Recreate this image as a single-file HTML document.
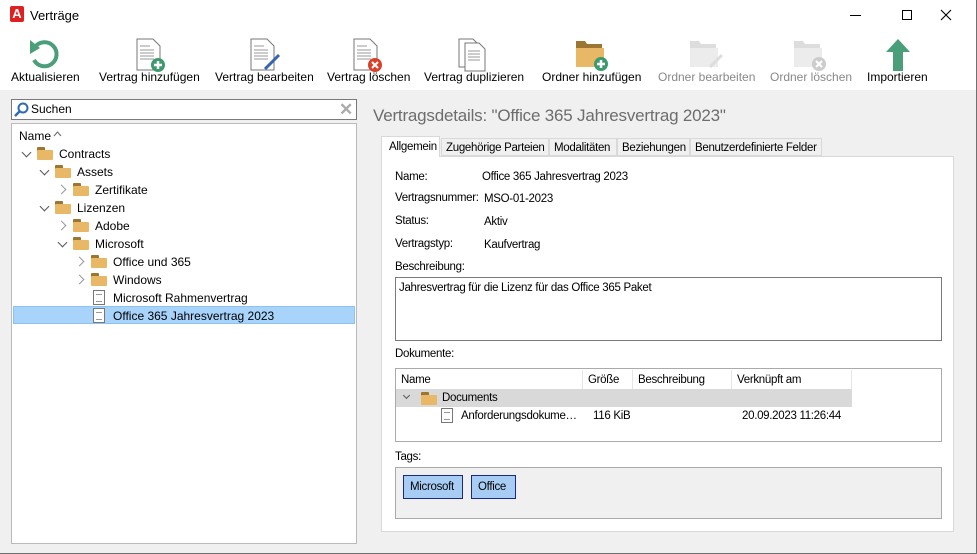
<!DOCTYPE html>
<html><head><meta charset="utf-8"><style>
*{box-sizing:border-box;margin:0;padding:0}
body{width:977px;height:554px;overflow:hidden;background:#f0f0f0;font-family:"Liberation Sans",sans-serif;font-size:12px;color:#000;position:relative}
.a{position:absolute}
.t{position:absolute;white-space:nowrap}
.r .t{font-size:11.5px;letter-spacing:-0.3px}
.fold{position:absolute;width:16px;height:12px}
.fold:before{content:"";position:absolute;left:0;top:0;width:8px;height:4px;background:#9c7530;border-radius:1px 1px 0 0}
.fold:after{content:"";position:absolute;left:0;top:3px;width:16px;height:10px;background:#e8b867;border-radius:1px}
.chev{position:absolute;width:7px;height:7px;border-right:1.5px solid #555;border-bottom:1.5px solid #555}
.down{transform:rotate(45deg)}
.right{transform:rotate(-45deg);border-color:#999}
.doc{position:absolute;width:12px;height:15px;border:1px solid #777;background:#fff}
.doc:after{content:"";position:absolute;left:2px;top:3px;width:6px;height:6px;border-top:1px solid #999;border-bottom:1px solid #999}
</style></head><body>
<div class="a" style="left:0;top:0;width:977px;height:90px;background:#fff"></div>
<div class="a" style="right:0;top:0;width:1px;height:554px;background:#707070"></div>
<div class="a" style="left:0;top:553px;width:977px;height:1px;background:#707070"></div>
<!-- title -->
<div class="a" style="left:10px;top:6px;width:14px;height:16px;background:#e02020;border-radius:2px;color:#fff;font-weight:bold;font-size:13px;text-align:center;line-height:15px">A</div>
<div class="t" style="left:30px;top:8px;font-size:13px">Verträge</div>
<div class="a" style="left:850px;top:15px;width:11px;height:1px;background:#000"></div>
<div class="a" style="left:902px;top:10px;width:10px;height:10px;border:1px solid #000"></div>
<svg class="a" style="left:940px;top:9px" width="12" height="12"><path d="M1 1L11 11M11 1L1 11" stroke="#000" stroke-width="1.1"/></svg>
<!-- toolbar -->
<svg class="a" style="left:0;top:36px" width="977" height="36">
<g fill="none" stroke="#4a9e7a" stroke-width="4"><path d="M35 11 A12 12 0 1 1 34 24"/></g><path d="M30 4 L40 12 L30 18Z" fill="#4a9e7a"/>
<g transform="translate(137,3)"><path d="M0 0h16l7 7v24H0Z" fill="#fff" stroke="#777"/><path d="M3 7h10M3 11h14M3 14h14M3 17h14M3 20h14" stroke="#999"/><circle cx="21" cy="26" r="7" fill="#3d9a6e"/><path d="M21 22v8M17 26h8" stroke="#fff" stroke-width="2.5"/></g>
<g transform="translate(251,3)"><path d="M0 0h16l7 7v24H0Z" fill="#fff" stroke="#777"/><path d="M3 7h10M3 11h14M3 14h14M3 17h14M3 20h14" stroke="#999"/><path d="M14 30 L28 16" stroke="#3565b0" stroke-width="3"/></g>
<g transform="translate(354,3)"><path d="M0 0h16l7 7v24H0Z" fill="#fff" stroke="#777"/><path d="M3 7h10M3 11h14M3 14h14M3 17h14M3 20h14" stroke="#999"/><circle cx="21" cy="26" r="7" fill="#d9402a"/><path d="M18 23l6 6M24 23l-6 6" stroke="#fff" stroke-width="2"/></g>
<g transform="translate(459,3)"><path d="M0 0h14l6 6v22H0Z" fill="#fff" stroke="#777"/><path d="M6 4h14l6 6v22H6Z" fill="#fff" stroke="#777"/><path d="M9 12h12M9 15h12M9 18h12M9 21h12" stroke="#999"/></g>
<g transform="translate(576,5)"><path d="M0 0h9l2 3h15v5H0Z" fill="#9c7530"/><rect x="0" y="7" width="28" height="19" fill="#e8b867"/><circle cx="25" cy="23" r="7" fill="#3d9a6e"/><path d="M25 19v8M21 23h8" stroke="#fff" stroke-width="2.5"/></g>
<g transform="translate(690,5)"><path d="M0 0h9l2 3h15v5H0Z" fill="#ddd"/><rect x="0" y="7" width="28" height="19" fill="#ececec"/><path d="M20 26 L32 14" stroke="#ddd" stroke-width="3"/></g>
<g transform="translate(794,5)"><path d="M0 0h9l2 3h15v5H0Z" fill="#ddd"/><rect x="0" y="7" width="28" height="19" fill="#ececec"/><circle cx="25" cy="23" r="7" fill="#ccc"/><path d="M22 20l6 6M28 20l-6 6" stroke="#fff" stroke-width="2"/></g>
<g transform="translate(885,3)"><path d="M13 0 L25 13 H18 V32 H8 V13 H1Z" fill="#4a9e7a"/></g>
</svg>
<div class="t" style="left:11px;top:70px">Aktualisieren</div>
<div class="t" style="left:99px;top:70px">Vertrag hinzufügen</div>
<div class="t" style="left:215px;top:70px">Vertrag bearbeiten</div>
<div class="t" style="left:327px;top:70px">Vertrag löschen</div>
<div class="t" style="left:424px;top:70px">Vertrag duplizieren</div>
<div class="t" style="left:542px;top:70px">Ordner hinzufügen</div>
<div class="t" style="left:658px;top:70px;color:#888">Ordner bearbeiten</div>
<div class="t" style="left:770px;top:70px;color:#888">Ordner löschen</div>
<div class="t" style="left:867px;top:70px">Importieren</div>
<!-- left -->
<div class="a" style="left:11px;top:99px;width:346px;height:21px;background:#fff;border:1px solid #7a7a7a"></div>
<svg class="a" style="left:14px;top:102px" width="16" height="16"><circle cx="9" cy="6" r="4.5" fill="none" stroke="#2f6bb5" stroke-width="2"/><path d="M6 9 L1 14" stroke="#2f6bb5" stroke-width="2.5"/></svg>
<div class="t" style="left:31px;top:102px">Suchen</div>
<div class="t" style="left:339px;top:100px;font-size:17px;color:#aaa;font-weight:bold">✕</div>
<div class="a" style="left:11px;top:123px;width:346px;height:421px;background:#fff;border:1px solid #bbb"></div>
<div class="t" style="left:19px;top:129px">Name</div>
<svg class="a" style="left:53px;top:131px" width="9" height="6"><path d="M1 5L4.5 1L8 5" fill="none" stroke="#666"/></svg>
<div class="a" style="left:13px;top:306px;width:342px;height:18px;background:#a8d3fb;border:1px solid #8cc3f2"></div>
<div class="chev down" style="left:23px;top:149px"></div><div class="fold" style="left:37px;top:147px"></div><div class="t" style="left:59px;top:147px">Contracts</div>
<div class="chev down" style="left:41px;top:167px"></div><div class="fold" style="left:55px;top:165px"></div><div class="t" style="left:77px;top:165px">Assets</div>
<div class="chev right" style="left:58px;top:186px"></div><div class="fold" style="left:73px;top:183px"></div><div class="t" style="left:95px;top:183px">Zertifikate</div>
<div class="chev down" style="left:41px;top:203px"></div><div class="fold" style="left:55px;top:201px"></div><div class="t" style="left:77px;top:201px">Lizenzen</div>
<div class="chev right" style="left:58px;top:222px"></div><div class="fold" style="left:73px;top:219px"></div><div class="t" style="left:95px;top:219px">Adobe</div>
<div class="chev down" style="left:59px;top:239px"></div><div class="fold" style="left:73px;top:237px"></div><div class="t" style="left:95px;top:237px">Microsoft</div>
<div class="chev right" style="left:76px;top:258px"></div><div class="fold" style="left:91px;top:255px"></div><div class="t" style="left:113px;top:255px">Office und 365</div>
<div class="chev right" style="left:76px;top:276px"></div><div class="fold" style="left:91px;top:273px"></div><div class="t" style="left:113px;top:273px">Windows</div>
<div class="doc" style="left:93px;top:290px"></div><div class="t" style="left:113px;top:291px">Microsoft Rahmenvertrag</div>
<div class="doc" style="left:93px;top:308px"></div><div class="t" style="left:113px;top:309px">Office 365 Jahresvertrag 2023</div>
<!-- right -->
<div class="r">
<div class="t" style="left:373px;top:106px;font-size:17px;color:#6d6d6d;letter-spacing:-0.2px">Vertragsdetails: "Office 365 Jahresvertrag 2023"</div>
<div class="a" style="left:381px;top:156px;width:573px;height:376px;background:#fff;border:1px solid #d9d9d9"></div>
<div class="a" style="left:381px;top:136px;width:59px;height:21px;background:#fff;border:1px solid #d9d9d9;border-bottom:none"></div>
<div class="t" style="left:389px;top:141px">Allgemein</div>
<div class="a" style="left:441px;top:138px;width:108px;height:18px;background:#f0f0f0;border:1px solid #d9d9d9"></div><div class="t" style="left:446px;top:142px">Zugehörige Parteien</div>
<div class="a" style="left:549px;top:138px;width:68px;height:18px;background:#f0f0f0;border:1px solid #d9d9d9"></div><div class="t" style="left:554px;top:142px">Modalitäten</div>
<div class="a" style="left:617px;top:138px;width:73px;height:18px;background:#f0f0f0;border:1px solid #d9d9d9"></div><div class="t" style="left:622px;top:142px">Beziehungen</div>
<div class="a" style="left:690px;top:138px;width:132px;height:18px;background:#f0f0f0;border:1px solid #d9d9d9"></div><div class="t" style="left:695px;top:142px">Benutzerdefinierte Felder</div>
<div class="t" style="left:395px;top:171px">Name:</div><div class="t" style="left:482px;top:171px">Office 365 Jahresvertrag 2023</div>
<div class="t" style="left:395px;top:192px">Vertragsnummer:</div><div class="t" style="left:484px;top:193px">MSO-01-2023</div>
<div class="t" style="left:395px;top:215px">Status:</div><div class="t" style="left:484px;top:216px">Aktiv</div>
<div class="t" style="left:395px;top:238px">Vertragstyp:</div><div class="t" style="left:484px;top:239px">Kaufvertrag</div>
<div class="t" style="left:395px;top:261px">Beschreibung:</div>
<div class="a" style="left:395px;top:277px;width:547px;height:64px;border:1px solid #7a7a7a"></div>
<div class="t" style="left:399px;top:282px">Jahresvertrag für die Lizenz für das Office 365 Paket</div>
<div class="t" style="left:395px;top:348px">Dokumente:</div>
<div class="a" style="left:395px;top:368px;width:547px;height:74px;border:1px solid #aaa"></div>
<div class="a" style="left:582px;top:370px;width:1px;height:19px;background:#e5e5e5"></div>
<div class="a" style="left:632px;top:370px;width:1px;height:19px;background:#e5e5e5"></div>
<div class="a" style="left:731px;top:370px;width:1px;height:19px;background:#e5e5e5"></div>
<div class="a" style="left:851px;top:370px;width:1px;height:19px;background:#e5e5e5"></div>
<div class="t" style="left:401px;top:374px">Name</div><div class="t" style="left:588px;top:374px">Größe</div><div class="t" style="left:638px;top:374px">Beschreibung</div><div class="t" style="left:737px;top:374px">Verknüpft am</div>
<div class="a" style="left:396px;top:389px;width:456px;height:18px;background:#d9d9d9"></div>
<div class="chev down" style="left:404px;top:393px;width:5px;height:5px"></div><div class="fold" style="left:421px;top:392px"></div><div class="t" style="left:442px;top:392px">Documents</div>
<div class="doc" style="left:441px;top:408px"></div><div class="t" style="left:461px;top:410px">Anforderungsdokume…</div><div class="t" style="left:593px;top:410px">116 KiB</div><div class="t" style="left:742px;top:410px">20.09.2023 11:26:44</div>
<div class="t" style="left:395px;top:451px">Tags:</div>
<div class="a" style="left:395px;top:467px;width:547px;height:52px;background:#f0f0f0;border:1px solid #aaa"></div>
<div class="a" style="left:403px;top:475px;width:60px;height:24px;background:#a8cdf5;border:1px solid #1a2a80"></div><div class="t" style="left:410px;top:481px">Microsoft</div>
<div class="a" style="left:471px;top:475px;width:45px;height:24px;background:#a8cdf5;border:1px solid #1a2a80"></div><div class="t" style="left:478px;top:481px">Office</div>
</div>
</body></html>
